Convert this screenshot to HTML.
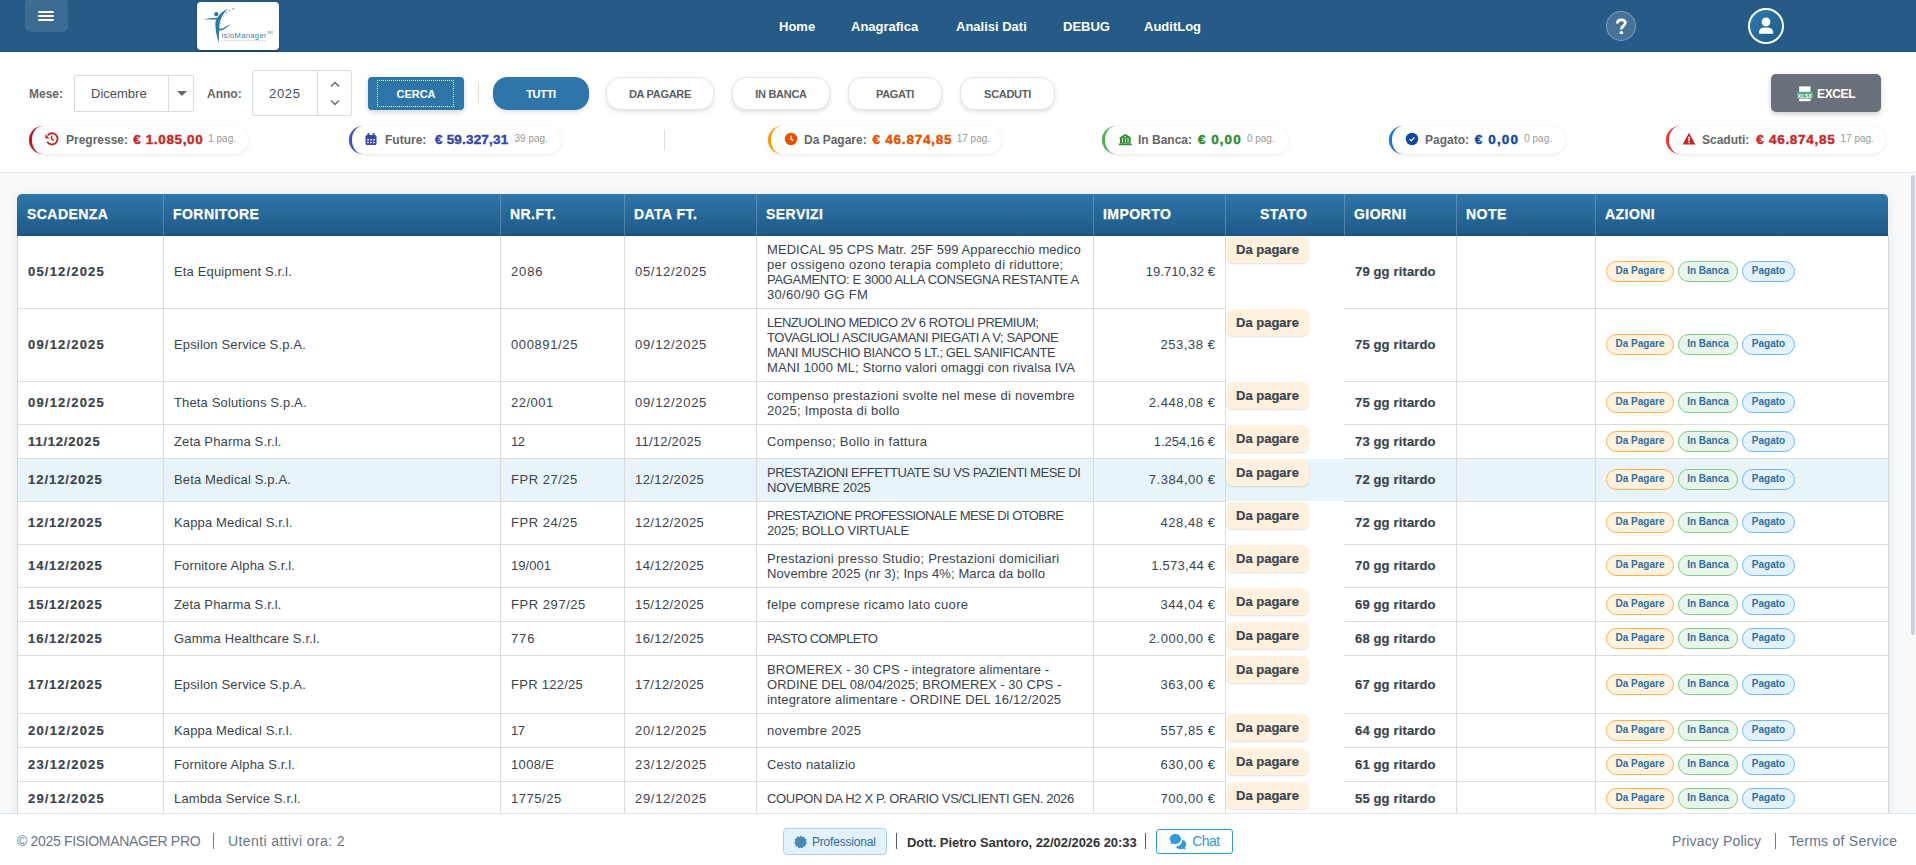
<!DOCTYPE html>
<html lang="it">
<head>
<meta charset="utf-8">
<title>FisioManager - Scadenziario</title>
<style>
*{box-sizing:border-box;margin:0;padding:0}
html,body{width:1916px;height:865px;overflow:hidden;background:#fff;font-family:"Liberation Sans",sans-serif;color:#3c4146}
.abs{position:absolute}
/* NAVBAR */
.nav{position:absolute;left:0;top:0;width:1916px;height:52px;background:#265b88;border-bottom:1px solid #1a507f}
.burger{position:absolute;left:25px;top:-2px;width:43px;height:34px;border-radius:6px;background:rgba(255,255,255,0.1)}
.burger i{position:absolute;left:13px;width:16px;height:2px;background:#fff;border-radius:1px}
.logo{position:absolute;left:197px;top:2px;width:82px;height:48px;background:#fff;border-radius:4px;box-shadow:0 1px 3px rgba(0,0,0,0.3)}
.navlinks a{position:absolute;top:19px;font-size:13px;font-weight:bold;color:#fff;text-decoration:none;line-height:15px;white-space:nowrap}
.help{position:absolute;left:1606px;top:11px;width:30px;height:30px;border-radius:50%;background:rgba(255,255,255,0.15);border:1px solid rgba(255,255,255,0.3)}
.user{position:absolute;left:1748px;top:8px;width:36px;height:36px;border-radius:50%;border:2px solid #fff;background:linear-gradient(135deg,#2e7bb0,#1f5a86)}
/* FILTER */
.filters{position:absolute;left:0;top:52px;width:1916px;height:121px;background:#fff;border-bottom:1px solid #e2e8ef}
.lbl{position:absolute;font-size:12px;font-weight:bold;color:#666;line-height:14px}
.sel{position:absolute;left:74px;top:75px;width:120px;height:37px;border:1px solid #d5dbe2;border-radius:2px;background:#fff}
.sel .t{position:absolute;left:16px;top:10px;font-size:13px;color:#495057;line-height:15px}
.sel .dv{position:absolute;left:93px;top:0;width:1px;height:35px;background:#d5dbe2}
.sel .tri{position:absolute;left:102px;top:15px;width:0;height:0;border-left:5px solid transparent;border-right:5px solid transparent;border-top:5px solid #666}
.num{position:absolute;left:252px;top:70px;width:100px;height:46px;border:1px solid #d5dbe2;border-radius:2px;background:#fff}
.num .t{position:absolute;left:16px;top:15px;font-size:13px;color:#495057;line-height:15px;letter-spacing:0.7px}
.num .dv{position:absolute;left:64px;top:0;width:1px;height:44px;background:#d5dbe2}
.btn-cerca{position:absolute;left:368px;top:77px;width:96px;height:33px;border-radius:4px;background:#2e76a9;box-shadow:0 2px 5px rgba(0,0,0,0.18)}
.btn-cerca .fo{position:absolute;left:9px;top:3px;width:77px;height:27px;border:1px dotted #fff}
.btn-cerca span{position:absolute;left:0;width:96px;top:11px;text-align:center;color:#fff;font-size:11px;font-weight:bold;line-height:13px}
.vsep{position:absolute;width:1px;background:#d4dce4}
.pill{position:absolute;top:77px;height:33px;border-radius:14px;background:#fff;border:1px solid #e1e6ec;box-shadow:0 2px 4px rgba(0,0,0,0.12);font-size:11px;font-weight:bold;color:#5c6065;text-align:center;line-height:31px;padding-top:1px;letter-spacing:-0.3px;white-space:nowrap}
.pill.on{background:#2e76a9;border-color:#2e76a9;color:#fff}
.excel{position:absolute;left:1771px;top:74px;width:110px;height:38px;border-radius:5px;background:#6b717a;box-shadow:0 2px 5px rgba(0,0,0,0.2)}
.excel span{position:absolute;left:46px;top:13px;font-size:12px;font-weight:bold;color:#fff;line-height:14px;letter-spacing:-0.35px}
.kpi{position:absolute;top:126px;height:28px;border-radius:14px;background:#fff;border-left:3px solid #b71c1c;box-shadow:0 1px 4px rgba(0,0,0,0.09);white-space:nowrap}
.kpi .ic{position:absolute;top:6px}
.kpi .l{position:absolute;top:7px;font-size:12px;font-weight:bold;color:#666;line-height:14px}
.kpi .v{position:absolute;top:6px;font-size:13.5px;font-weight:bold;line-height:15px;letter-spacing:0.4px;-webkit-text-stroke:0.4px currentColor}
.kpi .n{position:absolute;top:7px;font-size:10px;color:#999;line-height:12px}
/* CONTENT */
.content{position:absolute;left:0;top:173px;width:1916px;height:640px;background:#f7f9fb;overflow:hidden}
.card{position:absolute;left:17px;top:194px;width:1871px;height:640px;background:#fff;box-shadow:0 2px 12px rgba(0,0,0,0.08);border-radius:6px 6px 0 0}
.thead{position:absolute;left:17px;top:194px;width:1871px;height:42px;border-radius:5px 5px 0 0;background:linear-gradient(#2e78ab,#1f5886);border-bottom:1px solid #1a5083}
.th{position:absolute;top:207px;font-size:14px;font-weight:bold;color:#fff;line-height:14px;letter-spacing:0.45px;white-space:nowrap;-webkit-text-stroke:0.25px #fff}
.hvl{position:absolute;top:194px;width:1px;height:42px;background:rgba(255,255,255,0.22)}
.vline{position:absolute;top:236px;width:1px;height:580px;background:#dcdcdc}
.hline{position:absolute;height:1px;background:#dcdcdc}
.row{position:absolute;left:0;width:1916px}
.row.hl{background:linear-gradient(to right,transparent 17px,#e8f3fa 17px,#e8f3fa 1888px,transparent 1888px)}
.c{position:absolute;top:0;padding:0 10px;font-size:13px;line-height:15px;color:#3a444e;white-space:nowrap}
.c.b{font-weight:bold;-webkit-text-stroke:0.2px #3a444e}
.c.r{text-align:right}
.c.dt{letter-spacing:1px}
.c.dr{letter-spacing:0.7px}
.c.nr{letter-spacing:0.4px}
.c.gg{letter-spacing:0.15px}
.imp{letter-spacing:0.3px;margin-right:-0.3px}
.act{position:absolute;white-space:nowrap;font-size:0}
.st{position:absolute;top:0;width:118px}
.badge{display:inline-block;height:27px;padding:0 10px;border-radius:7px;background:#fff1de;box-shadow:0 1px 2px rgba(0,0,0,0.13);font-size:13px;font-weight:bold;color:#3b4550;line-height:27px;white-space:nowrap;-webkit-text-stroke:0.2px #3b4550}
.ab{display:inline-block;height:21px;border-radius:11px;border:1px solid;font-size:10px;font-weight:bold;color:#2f6ea2;line-height:18px;text-align:center;margin-right:4px;white-space:nowrap;vertical-align:top}
.ab1{background:#fff3e0;border-color:#ffb04c}
.ab2{background:#e8f5e9;border-color:#80c883}
.ab3{background:#e3f2fd;border-color:#6cb8f6}
.scroll{position:absolute;left:1911px;top:175px;width:4px;height:460px;border-radius:2px;background:#c8d3e0}
/* FOOTER */
.footer{position:absolute;left:0;top:813px;width:1916px;height:52px;background:#fff;border-top:1px solid #dfe5ec}
.ft{position:absolute;top:833px;font-size:14px;color:#687587;line-height:16px;white-space:nowrap}
.prof{position:absolute;left:783px;top:828px;width:104px;height:27px;border:1px solid #a9d2f3;border-radius:4px;background:#e3f2fd}
.prof span{position:absolute;left:28px;top:6px;font-size:12px;color:#1f6fa8;line-height:14px;letter-spacing:-0.2px}
.fsep{position:absolute;top:833px;width:1.4px;height:16px}
.chat{position:absolute;left:1156px;top:829px;width:77px;height:25px;border:1px solid #3598dc;border-radius:3px;background:#fff}
.chat span{position:absolute;left:35.3px;top:3px;font-size:14px;color:#3598dc;line-height:16px;letter-spacing:-0.6px}
</style>
</head>
<body>
<!-- NAVBAR -->
<div class="nav">
  <div class="burger"><i style="top:12.8px"></i><i style="top:17px"></i><i style="top:21.2px"></i></div>
  <div class="logo">
    <svg width="82" height="48" viewBox="0 0 82 48">
      <circle cx="19.3" cy="12.2" r="2.1" fill="#2a78a6"/>
      <path d="M6.4 17.4 Q12 16.2 20.2 15.8 L20.4 17.4 Q13 17.6 6.4 17.4Z" fill="#2a78a6"/>
      <path d="M31 6.8 Q24.5 9.5 20.6 15.2 Q18.2 18.6 18.3 22 Q18.5 30 20.2 35.5 Q21 38.5 21.7 41 Q21.9 36 22 31 Q22.2 24 22.9 19.5 Q25 12.5 31 6.8Z" fill="#2a78a6"/>
      <path d="M21.9 26.2 Q24.5 27.4 27.4 25.4 Q30.2 23.2 34 22.2 Q30.6 24.2 28 26.8 Q25.2 28.8 22 28.4Z" fill="#2a78a6"/>
      <g fill="#a8a8a8"><circle cx="36.3" cy="6.8" r="1"/><circle cx="32.3" cy="8.4" r="0.9"/><circle cx="29.2" cy="10.9" r="0.8"/><circle cx="26.7" cy="14" r="0.7"/><circle cx="24.9" cy="16.8" r="0.6"/><circle cx="23.6" cy="19.6" r="0.5"/><circle cx="23.4" cy="21.6" r="0.5"/></g>
      <text x="24.7" y="36" font-family="Liberation Sans" font-size="7.4" fill="#2f80b0" letter-spacing="0.45">isioManager</text>
      <text x="70.6" y="31.6" font-family="Liberation Sans" font-size="2.6" font-weight="bold" fill="#6aa6cc">PRO</text>
      <line x1="24.2" y1="38.6" x2="70.5" y2="38.6" stroke="#b8b8b8" stroke-width="0.9" stroke-dasharray="1.3 1.6"/>
    </svg>
  </div>
  <div class="navlinks">
    <a style="left:779px">Home</a>
    <a style="left:851px">Anagrafica</a>
    <a style="left:956px">Analisi Dati</a>
    <a style="left:1063px">DEBUG</a>
    <a style="left:1144px">AuditLog</a>
  </div>
  <div class="help">
    <svg width="28" height="28" viewBox="0 0 28 28" style="position:absolute;left:0;top:0"><path d="M10.3 11.4 C10.3 8.9 12 7.9 14.3 7.9 C16.6 7.9 18.3 9.1 18.3 11.1 C18.3 13.6 14.3 13.9 14.3 17.4" stroke="#fff" stroke-width="2.7" fill="none"/><rect x="12.5" y="19.2" width="3.6" height="2.9" rx="1.2" fill="#fff"/></svg>
  </div>
  <div class="user">
    <svg width="32" height="32" viewBox="0 0 32 32" style="position:absolute;left:0;top:0"><circle cx="16" cy="11.8" r="4.4" fill="#fff"/><path d="M8.8 23.8 Q8.8 17.6 14 17.6 L18 17.6 Q23.2 17.6 23.2 23.8Z" fill="#fff"/></svg>
  </div>
</div>

<!-- FILTERS -->
<div class="filters"></div>
<div class="lbl" style="left:29px;top:87px">Mese:</div>
<div class="sel"><div class="t">Dicembre</div><div class="dv"></div><div class="tri"></div></div>
<div class="lbl" style="left:207px;top:87px">Anno:</div>
<div class="num"><div class="t">2025</div><div class="dv"></div>
  <svg width="34" height="44" viewBox="0 0 34 44" style="position:absolute;left:65px;top:0"><path d="M13 15.5 L17 11.5 L21 15.5" stroke="#666" stroke-width="1.4" fill="none"/><path d="M13 29.5 L17 33.5 L21 29.5" stroke="#666" stroke-width="1.4" fill="none"/></svg>
</div>
<div class="btn-cerca"><div class="fo"></div><span>CERCA</span></div>
<div class="vsep" style="left:478px;top:83px;height:20px"></div>
<div class="pill on" style="left:493px;width:96px">TUTTI</div>
<div class="pill" style="left:606px;width:108px">DA PAGARE</div>
<div class="pill" style="left:732px;width:98px">IN BANCA</div>
<div class="pill" style="left:848px;width:94px">PAGATI</div>
<div class="pill" style="left:960px;width:95px">SCADUTI</div>
<div class="excel">
  <svg width="16" height="16" viewBox="0 0 16 16" style="position:absolute;left:26px;top:12px"><rect x="2.2" y="0.4" width="11.3" height="14.8" fill="#fff"/><rect x="0.1" y="5.8" width="15.7" height="6.9" fill="#5aa985"/><text x="8" y="11.6" font-family="Liberation Mono" font-size="5.8" fill="#fff" text-anchor="middle" font-weight="bold" letter-spacing="0.1">XLSX</text></svg>
  <span>EXCEL</span>
</div>

<!-- KPI -->
<div class="kpi" style="left:29px;width:219px;border-left-color:#b71c1c">
  <svg class="ic" style="left:13px;top:5px" width="15" height="15" viewBox="0 0 15 15"><path d="M2.6 4.3 A5.6 5.6 0 1 1 2.2 10.8" stroke="#c62828" stroke-width="1.9" fill="none"/><path d="M0.3 3.2 L0.3 7.5 L4.6 7.5Z" fill="#c62828"/><path d="M6.6 4.6 V7.7 L8.7 9.6" stroke="#c62828" stroke-width="1.5" fill="none"/></svg>
  <span class="l" style="left:34px">Pregresse:</span>
  <span class="v" style="left:101.2px;color:#c62828;letter-spacing:0.64px">€ 1.085,00</span>
  <span class="n" style="left:176.2px">1 pag.</span>
</div>
<div class="kpi" style="left:349px;width:212px;border-left-color:#3f51b5">
  <svg class="ic" style="left:13px" width="12" height="14" viewBox="0 0 12 14"><rect x="0.5" y="3" width="11" height="10" rx="1.5" fill="#3949ab"/><rect x="2.5" y="1" width="1.8" height="3" fill="#3949ab"/><rect x="7.7" y="1" width="1.8" height="3" fill="#3949ab"/><g fill="#fff"><rect x="2.2" y="7" width="1.6" height="1.4"/><rect x="5.2" y="7" width="1.6" height="1.4"/><rect x="8.2" y="7" width="1.6" height="1.4"/><rect x="2.2" y="9.8" width="1.6" height="1.4"/><rect x="5.2" y="9.8" width="1.6" height="1.4"/><rect x="8.2" y="9.8" width="1.6" height="1.4"/></g></svg>
  <span class="l" style="left:33px">Future:</span>
  <span class="v" style="left:83px;color:#3445a8;letter-spacing:0.19px">€ 59.327,31</span>
  <span class="n" style="left:162.5px">39 pag.</span>
</div>
<div class="vsep" style="left:664px;top:130px;height:20px"></div>
<div class="kpi" style="left:768px;width:233px;border-left-color:#ff9800">
  <svg class="ic" style="left:13px" width="14" height="14" viewBox="0 0 14 14"><circle cx="7" cy="7" r="6.2" fill="#e65100"/><path d="M7 3.5 L7 7.2 L9.2 8.6" stroke="#fff" stroke-width="1.2" fill="none"/></svg>
  <span class="l" style="left:33px">Da Pagare:</span>
  <span class="v" style="left:101.5px;color:#e65100;letter-spacing:0.77px">€ 46.874,85</span>
  <span class="n" style="left:185.7px">17 pag.</span>
</div>
<div class="kpi" style="left:1102px;width:186px;border-left-color:#4caf50">
  <svg class="ic" style="left:13px" width="15" height="15" viewBox="0 0 15 15"><path d="M0.9 5.7 L7.3 1.9 L13.8 5.7Z" fill="#2e8b35"/><circle cx="7.3" cy="4.4" r="0.65" fill="#fff"/><path d="M1.9 5.6 H12.6 V11.6 H1.9Z M4.1 6.3 V10.6 H5 V6.3Z M6.9 6.3 V10.6 H7.8 V6.3Z M9.6 6.3 V10.6 H10.5 V6.3Z" fill="#2e8b35" fill-rule="evenodd"/><rect x="0.9" y="11.5" width="12.9" height="1.8" rx="0.5" fill="#2e8b35"/></svg>
  <span class="l" style="left:33px">In Banca:</span>
  <span class="v" style="left:93px;color:#2e8b35;letter-spacing:1.02px">€ 0,00</span>
  <span class="n" style="left:141.9px">0 pag.</span>
</div>
<div class="kpi" style="left:1389px;width:176px;border-left-color:#1976d2">
  <svg class="ic" style="left:13px" width="14" height="14" viewBox="0 0 14 14"><circle cx="7" cy="7" r="6.2" fill="#0d47a1"/><path d="M4.6 7.2 L6.3 8.8 L9.4 5.4" stroke="#fff" stroke-width="1.2" fill="none"/></svg>
  <span class="l" style="left:33px">Pagato:</span>
  <span class="v" style="left:82.8px;color:#0d47a1;letter-spacing:1.12px">€ 0,00</span>
  <span class="n" style="left:132.2px">0 pag.</span>
</div>
<div class="kpi" style="left:1666px;width:219px;border-left-color:#e53935">
  <svg class="ic" style="left:13px" width="14" height="14" viewBox="0 0 14 14"><path d="M7 0.8 L13.4 12.6 L0.6 12.6Z" fill="#c62828"/><rect x="6.3" y="4.6" width="1.4" height="4.4" fill="#fff"/><rect x="6.3" y="9.8" width="1.4" height="1.4" fill="#fff"/></svg>
  <span class="l" style="left:33px">Scaduti:</span>
  <span class="v" style="left:87.2px;color:#c62828;letter-spacing:0.73px">€ 46.874,85</span>
  <span class="n" style="left:171.5px">17 pag.</span>
</div>

<!-- CONTENT -->
<div class="content"></div>
<div class="card"></div>
<div class="thead"></div>
<div class="hvl" style="left:163px"></div>
<div class="hvl" style="left:500px"></div>
<div class="hvl" style="left:624px"></div>
<div class="hvl" style="left:756px"></div>
<div class="hvl" style="left:1093px"></div>
<div class="hvl" style="left:1225px"></div>
<div class="hvl" style="left:1344px"></div>
<div class="hvl" style="left:1456px"></div>
<div class="hvl" style="left:1595px"></div>
<div class="th" style="left:27px">SCADENZA</div>
<div class="th" style="left:173px">FORNITORE</div>
<div class="th" style="left:510px">NR.FT.</div>
<div class="th" style="left:634px">DATA FT.</div>
<div class="th" style="left:766px">SERVIZI</div>
<div class="th" style="left:1103px">IMPORTO</div>
<div class="th" style="left:1260px">STATO</div>
<div class="th" style="left:1354px">GIORNI</div>
<div class="th" style="left:1466px">NOTE</div>
<div class="th" style="left:1605px">AZIONI</div>
<div class="row" style="top:236px;height:72px">
<div class="c b" style="left:18px;width:145px;height:72px;padding-top:28px;letter-spacing:1.186px">05/12/2025</div>
<div class="c " style="left:164px;width:336px;height:72px;padding-top:28px;letter-spacing:0.15px">Eta Equipment S.r.l.</div>
<div class="c " style="left:501px;width:123px;height:72px;padding-top:28px;letter-spacing:0.866px">2086</div>
<div class="c " style="left:625px;width:131px;height:72px;padding-top:28px;letter-spacing:0.691px">05/12/2025</div>
<div class="c sv" style="left:757px;width:336px;height:72px;padding-top:6px"><span style="letter-spacing:0.075px">MEDICAL 95 CPS Matr. 25F 599 Apparecchio medico</span><br><span style="letter-spacing:0.300px">per ossigeno ozono terapia completo di riduttore;</span><br><span style="letter-spacing:-0.315px">PAGAMENTO: E 3000 ALLA CONSEGNA RESTANTE A</span><br><span style="letter-spacing:0.305px">30/60/90 GG FM</span></div>
<div class="c r" style="left:1094px;width:131px;height:72px;padding-top:28px;"><span style="letter-spacing:0.054px;margin-right:-0.054px">19.710,32 €</span></div>
<div class="st" style="left:1226px"><span class="badge">Da pagare</span></div>
<div class="c b gg" style="left:1345px;width:111px;height:72px;padding-top:28px;">79 gg ritardo</div>
<div class="act" style="left:1606px;top:25px"><span class="ab ab1" style="width:68px">Da Pagare</span><span class="ab ab2" style="width:60px">In Banca</span><span class="ab ab3" style="width:53px">Pagato</span></div>
</div>
<div class="hline" style="top:308px;left:17px;width:1208px"></div>
<div class="hline" style="top:308px;left:1344px;width:545px"></div>
<div class="row" style="top:309px;height:72px">
<div class="c b" style="left:18px;width:145px;height:72px;padding-top:28px;letter-spacing:1.186px">09/12/2025</div>
<div class="c " style="left:164px;width:336px;height:72px;padding-top:28px;letter-spacing:0.15px">Epsilon Service S.p.A.</div>
<div class="c " style="left:501px;width:123px;height:72px;padding-top:28px;letter-spacing:0.613px">000891/25</div>
<div class="c " style="left:625px;width:131px;height:72px;padding-top:28px;letter-spacing:0.691px">09/12/2025</div>
<div class="c sv" style="left:757px;width:336px;height:72px;padding-top:6px"><span style="letter-spacing:-0.474px">LENZUOLINO MEDICO 2V 6 ROTOLI PREMIUM;</span><br><span style="letter-spacing:-0.397px">TOVAGLIOLI ASCIUGAMANI PIEGATI A V; SAPONE</span><br><span style="letter-spacing:-0.376px">MANI MUSCHIO BIANCO 5 LT.; GEL SANIFICANTE</span><br><span style="letter-spacing:0.113px">MANI 1000 ML; Storno valori omaggi con rivalsa IVA</span></div>
<div class="c r" style="left:1094px;width:131px;height:72px;padding-top:28px;"><span style="letter-spacing:0.559px;margin-right:-0.559px">253,38 €</span></div>
<div class="st" style="left:1226px"><span class="badge">Da pagare</span></div>
<div class="c b gg" style="left:1345px;width:111px;height:72px;padding-top:28px;">75 gg ritardo</div>
<div class="act" style="left:1606px;top:25px"><span class="ab ab1" style="width:68px">Da Pagare</span><span class="ab ab2" style="width:60px">In Banca</span><span class="ab ab3" style="width:53px">Pagato</span></div>
</div>
<div class="hline" style="top:381px;left:17px;width:1208px"></div>
<div class="hline" style="top:381px;left:1344px;width:545px"></div>
<div class="row" style="top:382px;height:42px">
<div class="c b" style="left:18px;width:145px;height:42px;padding-top:13px;letter-spacing:1.186px">09/12/2025</div>
<div class="c " style="left:164px;width:336px;height:42px;padding-top:13px;letter-spacing:0.15px">Theta Solutions S.p.A.</div>
<div class="c " style="left:501px;width:123px;height:42px;padding-top:13px;letter-spacing:0.486px">22/001</div>
<div class="c " style="left:625px;width:131px;height:42px;padding-top:13px;letter-spacing:0.691px">09/12/2025</div>
<div class="c sv" style="left:757px;width:336px;height:42px;padding-top:6px"><span style="letter-spacing:0.254px">compenso prestazioni svolte nel mese di novembre</span><br><span style="letter-spacing:0.253px">2025; Imposta di bollo</span></div>
<div class="c r" style="left:1094px;width:131px;height:42px;padding-top:13px;"><span style="letter-spacing:0.533px;margin-right:-0.533px">2.448,08 €</span></div>
<div class="st" style="left:1226px"><span class="badge">Da pagare</span></div>
<div class="c b gg" style="left:1345px;width:111px;height:42px;padding-top:13px;">75 gg ritardo</div>
<div class="act" style="left:1606px;top:10px"><span class="ab ab1" style="width:68px">Da Pagare</span><span class="ab ab2" style="width:60px">In Banca</span><span class="ab ab3" style="width:53px">Pagato</span></div>
</div>
<div class="hline" style="top:424px;left:17px;width:1208px"></div>
<div class="hline" style="top:424px;left:1344px;width:545px"></div>
<div class="row" style="top:425px;height:33px">
<div class="c b" style="left:18px;width:145px;height:33px;padding-top:9px;letter-spacing:0.808px">11/12/2025</div>
<div class="c " style="left:164px;width:336px;height:33px;padding-top:9px;letter-spacing:0.15px">Zeta Pharma S.r.l.</div>
<div class="c " style="left:501px;width:123px;height:33px;padding-top:9px;letter-spacing:-0.534px">12</div>
<div class="c " style="left:625px;width:131px;height:33px;padding-top:9px;letter-spacing:0.228px">11/12/2025</div>
<div class="c sv" style="left:757px;width:336px;height:33px;padding-top:9px"><span style="letter-spacing:0.272px">Compenso; Bollo in fattura</span></div>
<div class="c r" style="left:1094px;width:131px;height:33px;padding-top:9px;"><span style="letter-spacing:-0.027px;margin-right:0.027px">1.254,16 €</span></div>
<div class="st" style="left:1226px"><span class="badge">Da pagare</span></div>
<div class="c b gg" style="left:1345px;width:111px;height:33px;padding-top:9px;">73 gg ritardo</div>
<div class="act" style="left:1606px;top:6px"><span class="ab ab1" style="width:68px">Da Pagare</span><span class="ab ab2" style="width:60px">In Banca</span><span class="ab ab3" style="width:53px">Pagato</span></div>
</div>
<div class="hline" style="top:458px;left:17px;width:1208px"></div>
<div class="hline" style="top:458px;left:1344px;width:545px"></div>
<div class="row hl" style="top:459px;height:42px">
<div class="c b" style="left:18px;width:145px;height:42px;padding-top:13px;letter-spacing:0.961px">12/12/2025</div>
<div class="c " style="left:164px;width:336px;height:42px;padding-top:13px;letter-spacing:0.15px">Beta Medical S.p.A.</div>
<div class="c " style="left:501px;width:123px;height:42px;padding-top:13px;letter-spacing:0.516px">FPR 27/25</div>
<div class="c " style="left:625px;width:131px;height:42px;padding-top:13px;letter-spacing:0.411px">12/12/2025</div>
<div class="c sv" style="left:757px;width:336px;height:42px;padding-top:6px"><span style="letter-spacing:-0.434px">PRESTAZIONI EFFETTUATE SU VS PAZIENTI MESE DI</span><br><span style="letter-spacing:-0.258px">NOVEMBRE 2025</span></div>
<div class="c r" style="left:1094px;width:131px;height:42px;padding-top:13px;"><span style="letter-spacing:0.533px;margin-right:-0.533px">7.384,00 €</span></div>
<div class="st" style="left:1226px"><span class="badge">Da pagare</span></div>
<div class="c b gg" style="left:1345px;width:111px;height:42px;padding-top:13px;">72 gg ritardo</div>
<div class="act" style="left:1606px;top:10px"><span class="ab ab1" style="width:68px">Da Pagare</span><span class="ab ab2" style="width:60px">In Banca</span><span class="ab ab3" style="width:53px">Pagato</span></div>
</div>
<div class="hline" style="top:501px;left:17px;width:1208px"></div>
<div class="hline" style="top:501px;left:1344px;width:545px"></div>
<div class="row" style="top:502px;height:42px">
<div class="c b" style="left:18px;width:145px;height:42px;padding-top:13px;letter-spacing:0.961px">12/12/2025</div>
<div class="c " style="left:164px;width:336px;height:42px;padding-top:13px;letter-spacing:0.15px">Kappa Medical S.r.l.</div>
<div class="c " style="left:501px;width:123px;height:42px;padding-top:13px;letter-spacing:0.516px">FPR 24/25</div>
<div class="c " style="left:625px;width:131px;height:42px;padding-top:13px;letter-spacing:0.411px">12/12/2025</div>
<div class="c sv" style="left:757px;width:336px;height:42px;padding-top:6px"><span style="letter-spacing:-0.580px">PRESTAZIONE PROFESSIONALE MESE DI OTOBRE</span><br><span style="letter-spacing:-0.223px">2025; BOLLO VIRTUALE</span></div>
<div class="c r" style="left:1094px;width:131px;height:42px;padding-top:13px;"><span style="letter-spacing:0.559px;margin-right:-0.559px">428,48 €</span></div>
<div class="st" style="left:1226px"><span class="badge">Da pagare</span></div>
<div class="c b gg" style="left:1345px;width:111px;height:42px;padding-top:13px;">72 gg ritardo</div>
<div class="act" style="left:1606px;top:10px"><span class="ab ab1" style="width:68px">Da Pagare</span><span class="ab ab2" style="width:60px">In Banca</span><span class="ab ab3" style="width:53px">Pagato</span></div>
</div>
<div class="hline" style="top:544px;left:17px;width:1208px"></div>
<div class="hline" style="top:544px;left:1344px;width:545px"></div>
<div class="row" style="top:545px;height:42px">
<div class="c b" style="left:18px;width:145px;height:42px;padding-top:13px;letter-spacing:0.961px">14/12/2025</div>
<div class="c " style="left:164px;width:336px;height:42px;padding-top:13px;letter-spacing:0.15px">Fornitore Alpha S.r.l.</div>
<div class="c " style="left:501px;width:123px;height:42px;padding-top:13px;letter-spacing:0.020px">19/001</div>
<div class="c " style="left:625px;width:131px;height:42px;padding-top:13px;letter-spacing:0.411px">14/12/2025</div>
<div class="c sv" style="left:757px;width:336px;height:42px;padding-top:6px"><span style="letter-spacing:0.242px">Prestazioni presso Studio; Prestazioni domiciliari</span><br><span style="letter-spacing:0.091px">Novembre 2025 (nr 3); Inps 4%; Marca da bollo</span></div>
<div class="c r" style="left:1094px;width:131px;height:42px;padding-top:13px;"><span style="letter-spacing:0.253px;margin-right:-0.253px">1.573,44 €</span></div>
<div class="st" style="left:1226px"><span class="badge">Da pagare</span></div>
<div class="c b gg" style="left:1345px;width:111px;height:42px;padding-top:13px;">70 gg ritardo</div>
<div class="act" style="left:1606px;top:10px"><span class="ab ab1" style="width:68px">Da Pagare</span><span class="ab ab2" style="width:60px">In Banca</span><span class="ab ab3" style="width:53px">Pagato</span></div>
</div>
<div class="hline" style="top:587px;left:17px;width:1208px"></div>
<div class="hline" style="top:587px;left:1344px;width:545px"></div>
<div class="row" style="top:588px;height:33px">
<div class="c b" style="left:18px;width:145px;height:33px;padding-top:9px;letter-spacing:0.961px">15/12/2025</div>
<div class="c " style="left:164px;width:336px;height:33px;padding-top:9px;letter-spacing:0.15px">Zeta Pharma S.r.l.</div>
<div class="c " style="left:501px;width:123px;height:33px;padding-top:9px;letter-spacing:0.551px">FPR 297/25</div>
<div class="c " style="left:625px;width:131px;height:33px;padding-top:9px;letter-spacing:0.411px">15/12/2025</div>
<div class="c sv" style="left:757px;width:336px;height:33px;padding-top:9px"><span style="letter-spacing:0.283px">felpe comprese ricamo lato cuore</span></div>
<div class="c r" style="left:1094px;width:131px;height:33px;padding-top:9px;"><span style="letter-spacing:0.559px;margin-right:-0.559px">344,04 €</span></div>
<div class="st" style="left:1226px"><span class="badge">Da pagare</span></div>
<div class="c b gg" style="left:1345px;width:111px;height:33px;padding-top:9px;">69 gg ritardo</div>
<div class="act" style="left:1606px;top:6px"><span class="ab ab1" style="width:68px">Da Pagare</span><span class="ab ab2" style="width:60px">In Banca</span><span class="ab ab3" style="width:53px">Pagato</span></div>
</div>
<div class="hline" style="top:621px;left:17px;width:1208px"></div>
<div class="hline" style="top:621px;left:1344px;width:545px"></div>
<div class="row" style="top:622px;height:33px">
<div class="c b" style="left:18px;width:145px;height:33px;padding-top:9px;letter-spacing:0.961px">16/12/2025</div>
<div class="c " style="left:164px;width:336px;height:33px;padding-top:9px;letter-spacing:0.15px">Gamma Healthcare S.r.l.</div>
<div class="c " style="left:501px;width:123px;height:33px;padding-top:9px;letter-spacing:0.866px">776</div>
<div class="c " style="left:625px;width:131px;height:33px;padding-top:9px;letter-spacing:0.411px">16/12/2025</div>
<div class="c sv" style="left:757px;width:336px;height:33px;padding-top:9px"><span style="letter-spacing:-0.635px">PASTO COMPLETO</span></div>
<div class="c r" style="left:1094px;width:131px;height:33px;padding-top:9px;"><span style="letter-spacing:0.533px;margin-right:-0.533px">2.000,00 €</span></div>
<div class="st" style="left:1226px"><span class="badge">Da pagare</span></div>
<div class="c b gg" style="left:1345px;width:111px;height:33px;padding-top:9px;">68 gg ritardo</div>
<div class="act" style="left:1606px;top:6px"><span class="ab ab1" style="width:68px">Da Pagare</span><span class="ab ab2" style="width:60px">In Banca</span><span class="ab ab3" style="width:53px">Pagato</span></div>
</div>
<div class="hline" style="top:655px;left:17px;width:1208px"></div>
<div class="hline" style="top:655px;left:1344px;width:545px"></div>
<div class="row" style="top:656px;height:57px">
<div class="c b" style="left:18px;width:145px;height:57px;padding-top:21px;letter-spacing:0.961px">17/12/2025</div>
<div class="c " style="left:164px;width:336px;height:57px;padding-top:21px;letter-spacing:0.15px">Epsilon Service S.p.A.</div>
<div class="c " style="left:501px;width:123px;height:57px;padding-top:21px;letter-spacing:0.271px">FPR 122/25</div>
<div class="c " style="left:625px;width:131px;height:57px;padding-top:21px;letter-spacing:0.411px">17/12/2025</div>
<div class="c sv" style="left:757px;width:336px;height:57px;padding-top:6px"><span style="letter-spacing:0.126px">BROMEREX - 30 CPS - integratore alimentare -</span><br><span style="letter-spacing:0.016px">ORDINE DEL 08/04/2025; BROMEREX - 30 CPS -</span><br><span style="letter-spacing:0.186px">integratore alimentare - ORDINE DEL 16/12/2025</span></div>
<div class="c r" style="left:1094px;width:131px;height:57px;padding-top:21px;"><span style="letter-spacing:0.559px;margin-right:-0.559px">363,00 €</span></div>
<div class="st" style="left:1226px"><span class="badge">Da pagare</span></div>
<div class="c b gg" style="left:1345px;width:111px;height:57px;padding-top:21px;">67 gg ritardo</div>
<div class="act" style="left:1606px;top:18px"><span class="ab ab1" style="width:68px">Da Pagare</span><span class="ab ab2" style="width:60px">In Banca</span><span class="ab ab3" style="width:53px">Pagato</span></div>
</div>
<div class="hline" style="top:713px;left:17px;width:1208px"></div>
<div class="hline" style="top:713px;left:1344px;width:545px"></div>
<div class="row" style="top:714px;height:33px">
<div class="c b" style="left:18px;width:145px;height:33px;padding-top:9px;letter-spacing:1.186px">20/12/2025</div>
<div class="c " style="left:164px;width:336px;height:33px;padding-top:9px;letter-spacing:0.15px">Kappa Medical S.r.l.</div>
<div class="c " style="left:501px;width:123px;height:33px;padding-top:9px;letter-spacing:-0.534px">17</div>
<div class="c " style="left:625px;width:131px;height:33px;padding-top:9px;letter-spacing:0.691px">20/12/2025</div>
<div class="c sv" style="left:757px;width:336px;height:33px;padding-top:9px"><span style="letter-spacing:0.310px">novembre 2025</span></div>
<div class="c r" style="left:1094px;width:131px;height:33px;padding-top:9px;"><span style="letter-spacing:0.559px;margin-right:-0.559px">557,85 €</span></div>
<div class="st" style="left:1226px"><span class="badge">Da pagare</span></div>
<div class="c b gg" style="left:1345px;width:111px;height:33px;padding-top:9px;">64 gg ritardo</div>
<div class="act" style="left:1606px;top:6px"><span class="ab ab1" style="width:68px">Da Pagare</span><span class="ab ab2" style="width:60px">In Banca</span><span class="ab ab3" style="width:53px">Pagato</span></div>
</div>
<div class="hline" style="top:747px;left:17px;width:1208px"></div>
<div class="hline" style="top:747px;left:1344px;width:545px"></div>
<div class="row" style="top:748px;height:33px">
<div class="c b" style="left:18px;width:145px;height:33px;padding-top:9px;letter-spacing:1.186px">23/12/2025</div>
<div class="c " style="left:164px;width:336px;height:33px;padding-top:9px;letter-spacing:0.15px">Fornitore Alpha S.r.l.</div>
<div class="c " style="left:501px;width:123px;height:33px;padding-top:9px;letter-spacing:0.342px">1008/E</div>
<div class="c " style="left:625px;width:131px;height:33px;padding-top:9px;letter-spacing:0.691px">23/12/2025</div>
<div class="c sv" style="left:757px;width:336px;height:33px;padding-top:9px"><span style="letter-spacing:0.220px">Cesto natalizio</span></div>
<div class="c r" style="left:1094px;width:131px;height:33px;padding-top:9px;"><span style="letter-spacing:0.559px;margin-right:-0.559px">630,00 €</span></div>
<div class="st" style="left:1226px"><span class="badge">Da pagare</span></div>
<div class="c b gg" style="left:1345px;width:111px;height:33px;padding-top:9px;">61 gg ritardo</div>
<div class="act" style="left:1606px;top:6px"><span class="ab ab1" style="width:68px">Da Pagare</span><span class="ab ab2" style="width:60px">In Banca</span><span class="ab ab3" style="width:53px">Pagato</span></div>
</div>
<div class="hline" style="top:781px;left:17px;width:1208px"></div>
<div class="hline" style="top:781px;left:1344px;width:545px"></div>
<div class="row" style="top:782px;height:33px">
<div class="c b" style="left:18px;width:145px;height:33px;padding-top:9px;letter-spacing:1.186px">29/12/2025</div>
<div class="c " style="left:164px;width:336px;height:33px;padding-top:9px;letter-spacing:0.15px">Lambda Service S.r.l.</div>
<div class="c " style="left:501px;width:123px;height:33px;padding-top:9px;letter-spacing:0.541px">1775/25</div>
<div class="c " style="left:625px;width:131px;height:33px;padding-top:9px;letter-spacing:0.691px">29/12/2025</div>
<div class="c sv" style="left:757px;width:336px;height:33px;padding-top:9px"><span style="letter-spacing:-0.337px">COUPON DA H2 X P. ORARIO VS/CLIENTI GEN. 2026</span></div>
<div class="c r" style="left:1094px;width:131px;height:33px;padding-top:9px;"><span style="letter-spacing:0.559px;margin-right:-0.559px">700,00 €</span></div>
<div class="st" style="left:1226px"><span class="badge">Da pagare</span></div>
<div class="c b gg" style="left:1345px;width:111px;height:33px;padding-top:9px;">55 gg ritardo</div>
<div class="act" style="left:1606px;top:6px"><span class="ab ab1" style="width:68px">Da Pagare</span><span class="ab ab2" style="width:60px">In Banca</span><span class="ab ab3" style="width:53px">Pagato</span></div>
</div>
<div class="hline" style="top:815px;left:17px;width:1208px"></div>
<div class="hline" style="top:815px;left:1344px;width:545px"></div>
<div class="vline" style="left:17px;background:#d2d8de"></div>
<div class="vline" style="left:163px"></div>
<div class="vline" style="left:500px"></div>
<div class="vline" style="left:624px"></div>
<div class="vline" style="left:756px"></div>
<div class="vline" style="left:1093px"></div>
<div class="vline" style="left:1225px"></div>
<div class="vline" style="left:1456px"></div>
<div class="vline" style="left:1595px"></div>
<div class="vline" style="left:1888px;background:#d2d8de"></div>
<div class="scroll"></div>

<!-- FOOTER -->
<div class="footer"></div>
<div class="ft" style="left:17px;letter-spacing:-0.33px">© 2025 FISIOMANAGER PRO</div>
<div class="fsep" style="left:213px;background:#6b7a8f"></div>
<div class="ft" style="left:228px;letter-spacing:0.4px">Utenti attivi ora: 2</div>
<div class="prof">
  <svg width="14" height="14" viewBox="0 0 14 14" style="position:absolute;left:10px;top:6px"><path d="M7 0.6 L8.4 2.2 L10.5 1.7 L10.8 3.8 L12.8 4.6 L12 6.6 L13.2 8.3 L11.4 9.4 L11.4 11.6 L9.3 11.6 L8.2 13.4 L6.4 12.4 L4.6 13.4 L3.6 11.6 L1.5 11.4 L1.6 9.3 L0 8 L1.3 6.3 L0.6 4.3 L2.6 3.6 L3 1.5 L5.1 2Z" fill="#4a89b8"/></svg>
  <span>Professional</span>
</div>
<div class="fsep" style="left:896px;width:1.4px;background:#555d6a"></div>
<div class="ft" style="left:907px;top:835px;font-size:13px;font-weight:bold;color:#333;letter-spacing:-0.06px">Dott. Pietro Santoro, 22/02/2026 20:33</div>
<div class="fsep" style="left:1145px;width:1.4px;background:#555d6a"></div>
<div class="chat">
  <svg width="18" height="17" viewBox="0 0 18 17" style="position:absolute;left:13px;top:4px;overflow:visible"><path d="M5.4 -0.1 C8.6 -0.1 11 2.1 11 4.9 C11 7.7 8.6 9.9 5.4 9.9 C4.7 9.9 4.1 9.8 3.5 9.6 L0.2 10.2 L1.4 8 C0.3 7.2 -0.3 6.1 -0.3 4.9 C-0.3 2.1 2.2 -0.1 5.4 -0.1Z" fill="#3598dc"/><path d="M16.2 10.2 C16.2 11.5 15.7 12.6 14.8 13.5 L15.8 15.6 L12.8 14.8 C12.1 15 11.4 15.2 10.7 15.2 C8.5 15.2 6.5 14.2 5.5 12.6 C9.6 12.3 12.4 9.5 12.2 5.8 C14.6 6.6 16.2 8.3 16.2 10.2Z" fill="#3598dc"/></svg>
  <span>Chat</span>
</div>
<div class="ft" style="left:1672px;letter-spacing:0.15px">Privacy Policy</div>
<div class="fsep" style="left:1775px;background:#6b7a8f"></div>
<div class="ft" style="left:1789px;letter-spacing:0.25px">Terms of Service</div>
</body>
</html>
